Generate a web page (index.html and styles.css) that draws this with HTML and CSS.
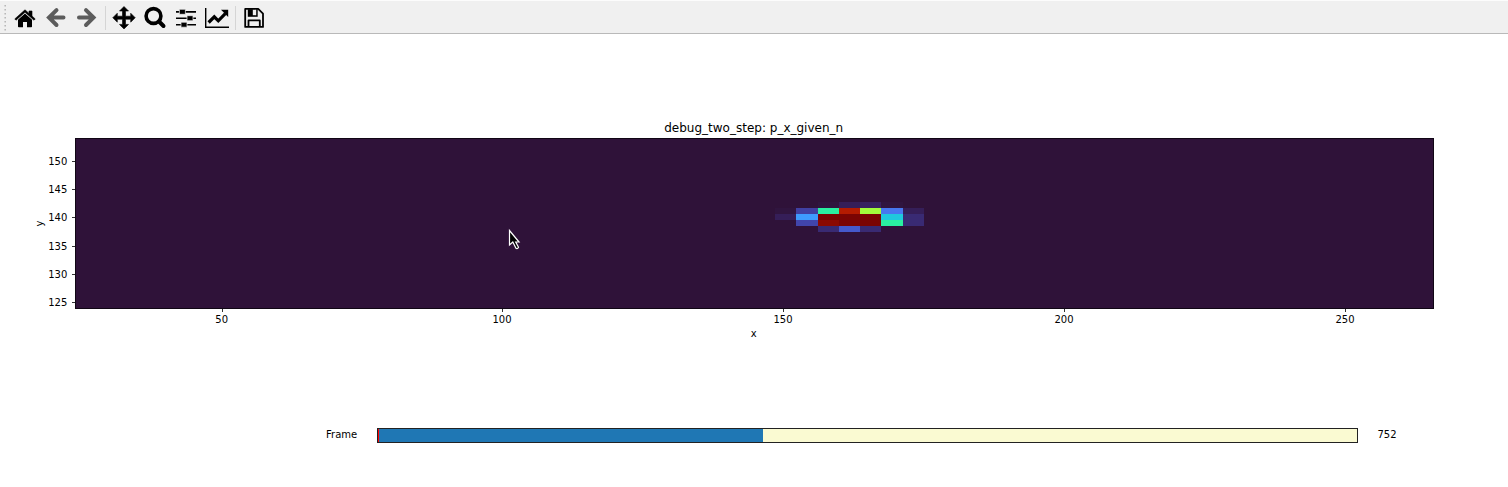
FILE: index.html
```html
<!DOCTYPE html>
<html lang="en">
<head>
<meta charset="utf-8">
<title>Figure 1</title>
<link rel="stylesheet" href="styles.css">
</head>
<body>
<div class="toolbar">
  <svg class="grip" viewBox="0 0 4 28"><path d="M1.200 1v27" /></svg>
  <svg class="icon" viewBox="0 0 24 24"><path d="M12 7.500 19 13.800V20.500q0 .8-.8.8H14V16H10v5.300H5.800q-.8 0-.8-.8V13.800z"/><path d="M12 3.800 1.800 12.900l1.200 1.300L12 6.200l9 8 1.200-1.300-3.200-2.900V5h-3v2.400z" class="joined"/></svg>
  <svg class="icon muted" viewBox="0 0 24 24"><path d="M12.500 4.200 5 11.600l7.500 7.400M6 11.600H19.500" class="arrow"/></svg>
  <svg class="icon muted" viewBox="0 0 24 24"><path d="M11 4.200 18.500 11.600 11 19M17.500 11.600H4" class="arrow"/></svg>
  <span class="sep"></span>
  <svg class="icon" viewBox="0 0 24 24"><path d="M12 .5 16.500 5H13.500V10.200H18.700V7.200L23.200 11.700l-4.500 4.500V13.200H13.500V18.400H16.500L12 22.900 7.500 18.400H10.500V13.200H5.300V16.200L.8 11.700 5.300 7.200V10.200H10.500V5H7.500z" class="joined"/></svg>
  <svg class="icon" viewBox="0 0 24 24"><circle cx="10.500" cy="10" r="7.400" class="lens"/><path d="m16 15.500 4.500 4.500" class="handle"/></svg>
  <svg class="icon" viewBox="0 0 24 24"><path d="M2 5h20v1.700H2zM2 11.400h20v1.700H2zM2 17.900h20v1.700H2z"/><path d="M5.400 3.300h6v5h-6zM13 9.700h6v5h-6zM7 16.200h6v5H7z" class="knobs"/></svg>
  <svg class="icon" viewBox="0 0 24 24"><path d="M0 2h1.400v18.400H24V22H0z"/><path d="m3.600 16.500 5.700-5.700 4 4 7-7.200" class="trend"/><path d="M16 3.700h7.200v7.200z"/></svg>
  <span class="sep"></span>
  <svg class="icon" viewBox="0 0 24 24"><path d="M3.200 2.900h13l4.800 4.800v13.200H3.200z" class="disk"/><path d="M5.800 3.200h9.900v7.600H5.800z"/><path class="slot" d="M10.800 3.800h3.400v5.400h-3.400z"/><path d="M6.500 21v-6.600h11.300V21" class="disk"/></svg>
</div>

<svg class="plot" viewBox="0 34 1508 326">
  <text x="753.700" y="132" class="title">debug_two_step: p_x_given_n</text>
  <rect x="75" y="138" width="1359" height="171" fill="#2f1239"/>
  <g class="cells">
    <path fill="#30153f" d="M775 208h21v6h-21zM818 202h21v6h-21zM881 202h22v6h-22z"/>
    <path fill="#351e58" d="M775 214h21v6h-21zM903 208h21v6h-21zM839 202h21v6h-21z"/>
    <path fill="#38225f" d="M860 202h21v6h-21z"/>
    <path fill="#392a73" d="M903 214h21v12h-21zM818 226h21v6h-21zM860 226h21v6h-21z"/>
    <path fill="#4040a2" d="M796 208h22v6h-22z"/>
    <path fill="#4145ab" d="M796 220h22v6h-22z"/>
    <path fill="#4559cb" d="M839 226h21v6h-21z"/>
    <path fill="#3e9bfe" d="M796 214h22v6h-22z"/>
    <path fill="#4777ef" d="M881 208h22v6h-22z"/>
    <path fill="#1fc9dd" d="M881 214h22v6h-22z"/>
    <path fill="#2aefa1" d="M818 208h21v6h-21zM881 220h22v6h-22z"/>
    <path fill="#b41b01" d="M839 208h21v6h-21z"/>
    <path fill="#a2fc3c" d="M860 208h21v6h-21z"/>
    <path fill="#7a0403" d="M818 214h63v12h-63z"/>
    <path fill="#8b0902" d="M818 220h21v6h-21z"/>
  </g>
  <rect x="75.500" y="138.500" width="1358" height="170" class="frame"/>
  <path class="ticks" d="M72 161.500h3M72 189.500h3M72 217.500h3M72 246.500h3M72 274.500h3M72 302.500h3M222.500 309v3M502.500 309v3M783.500 309v3M1064.500 309v3M1345.500 309v3"/>
  <g class="y-labels">
    <text x="67.300" y="165">150</text><text x="67.300" y="193">145</text><text x="67.300" y="221">140</text>
    <text x="67.300" y="250">135</text><text x="67.300" y="278">130</text><text x="67.300" y="306">125</text>
  </g>
  <g class="x-labels">
    <text x="221.700" y="323">50</text><text x="502" y="323">100</text><text x="783" y="323">150</text>
    <text x="1064" y="323">200</text><text x="1345" y="323">250</text><text x="753.700" y="337">x</text>
    <text transform="translate(43 223.500) rotate(-90)">y</text>
  </g>
  <path class="cursor" d="M509.500 230.500v14.500l3.300-3 3.200 6.300q1.500 1 2.500-1l-2.800-5.300h3.300z"/>
</svg>

<div class="slider">
  <span class="slider-label">Frame</span>
  <div class="track"><div class="start"></div><div class="fill"></div></div>
  <span class="slider-value">752</span>
</div>
</body>
</html>
```
FILE: styles.css
```css
body {
  margin: 0;
  height: 487px;
  overflow: hidden;
  background: #fff;
  color: #000;
  font: 10px "DejaVu Sans", sans-serif;
}
.toolbar {
  box-sizing: border-box;
  height: 34px;
  display: flex;
  align-items: center;
  gap: 7px;
  padding: 1px 0 0 4px;
  border-top: 1px solid #fcfcfc;
  border-bottom: 1px solid #b9b9b9;
  background: #f0f0f0;
}
.grip { width: 4px; height: 28px; margin-right: -2px; }
.grip path { stroke: #b5b5b5; stroke-width: 1.5; stroke-dasharray: 1.5 2.5; }
.icon { width: 24px; height: 24px; flex: none; }
.muted { color: #5c5c5c; }
.arrow { fill: none; stroke: currentColor; stroke-width: 4; stroke-linecap: round; }
.joined { stroke: #000; stroke-width: .6; stroke-linejoin: round; }
.lens { fill: none; stroke: #000; stroke-width: 3.6; }
.handle { stroke: #000; stroke-width: 4; stroke-linecap: round; }
.knobs { stroke: #f0f0f0; stroke-width: .7; }
.trend { fill: none; stroke: #000; stroke-width: 3.2; }
.disk { fill: none; stroke: #000; stroke-width: 1.8; stroke-linejoin: round; }
.slot { fill: #f0f0f0; }
.sep { width: 1px; height: 24px; margin: 0 -1px; background: #d5d5d5; }
.plot { display: block; width: 1508px; height: 326px; }
.title { font-size: 12px; text-anchor: middle; }
.cells { shape-rendering: crispEdges; }
.frame { fill: none; stroke: #100614; }
.ticks { stroke: #333; }
.y-labels { text-anchor: end; }
.x-labels { text-anchor: middle; }
.cursor { fill: #000; stroke: #fff; stroke-width: 1.2; }
.slider {
  display: flex;
  align-items: center;
  height: 15px;
  padding: 68px 0 0 326px;
}
.slider-label { width: 51px; line-height: 12px; margin-top: -2px; }
.track {
  box-sizing: border-box;
  display: flex;
  width: 981px;
  height: 15px;
  border: 1px solid #222;
  background: #fafad2;
}
.start { width: 1px; background: #f00; }
.fill { width: 384px; background: #1f77b4; }
.slider-value { margin: -2px 0 0 19.5px; line-height: 12px; }
```
